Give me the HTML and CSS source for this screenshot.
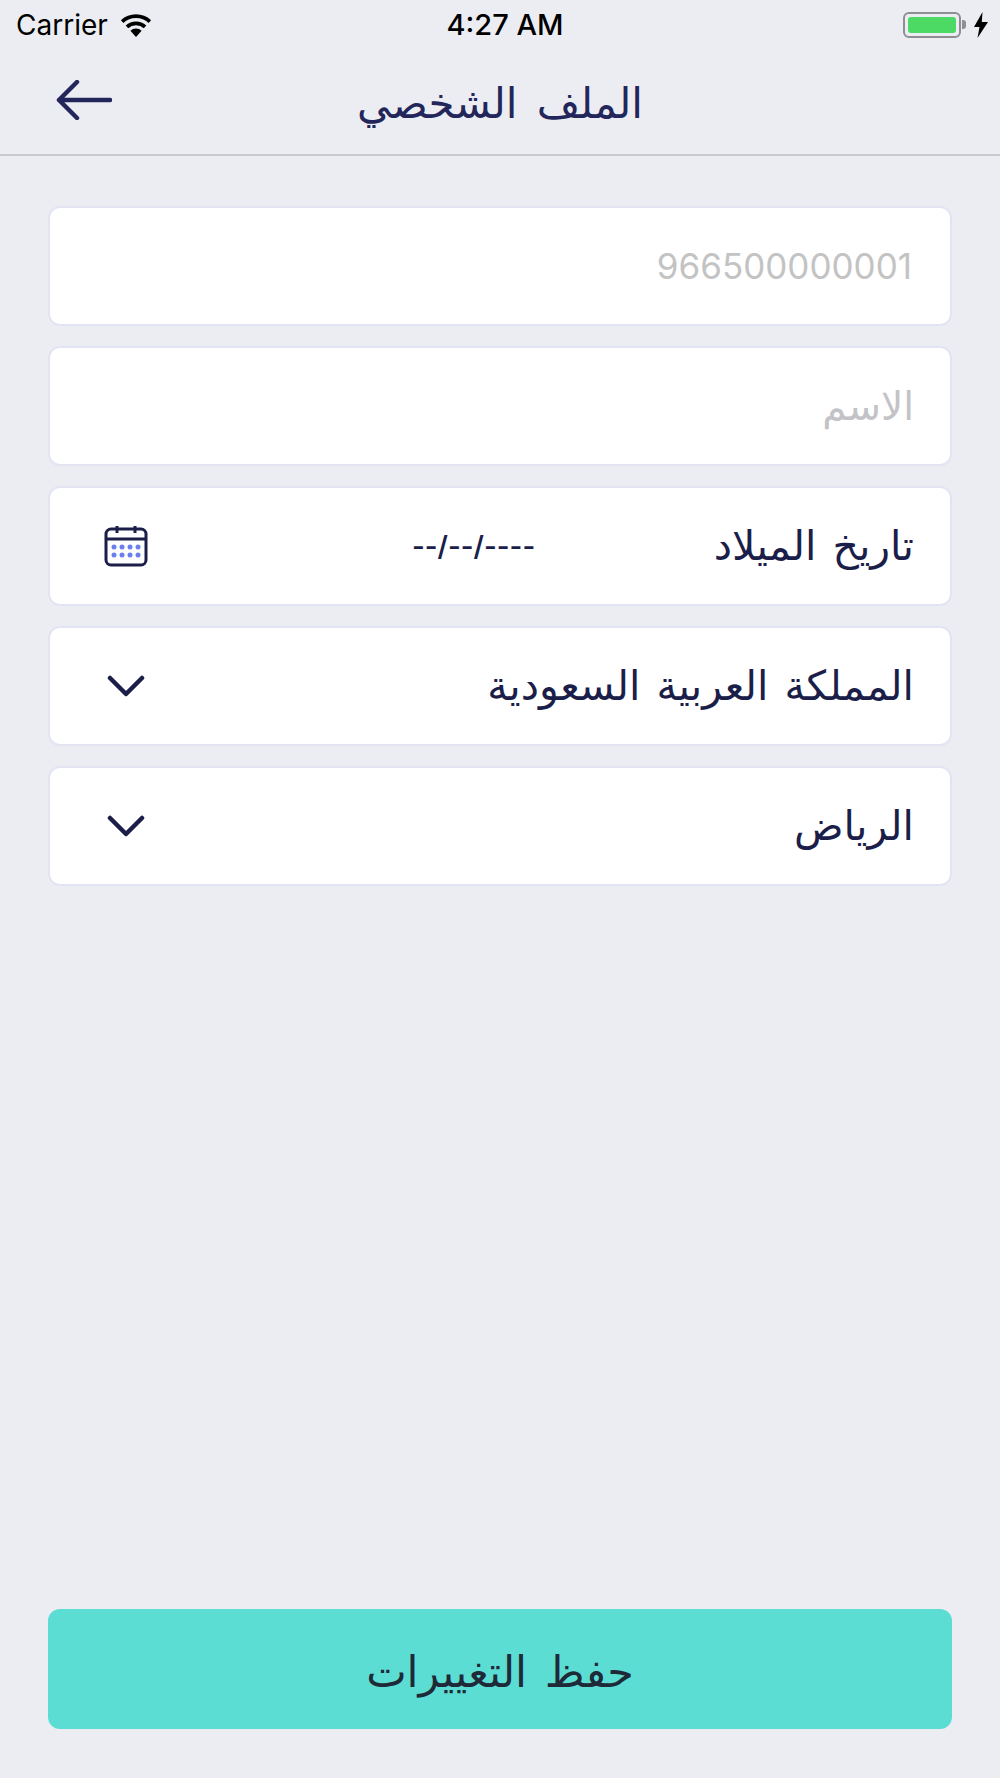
FILE: index.html
```html
<!DOCTYPE html>
<html lang="ar" dir="rtl">
  <head>
    <title>الملف الشخصي</title>
    <meta charset="UTF-8">
    <meta name="viewport" content="width=device-width, initial-scale=1">
    <link rel="stylesheet" href="styles.css">
  </head>
  <body>
    <div class="page">
      <div class="status-bar">
        <div class="status-bar__left">
          <span class="carrier">Carrier</span>
          <svg class="wifi" viewBox="0 0 34 24" width="34" height="24">
            <path d="M17 24l-5.6-6.2a8 8 0 0 1 11.2 0z" fill="#000"/>
            <path d="M9.2 15.300a11.500 11.500 0 0 1 15.600 0l2.500-2.800a15.300 15.300 0 0 0-20.600 0z" fill="#000"/>
            <path d="M4.400 10a18.500 18.500 0 0 1 25.200 0l2.500-2.800a22.300 22.300 0 0 0-30.200 0z" fill="#000"/>
          </svg>
        </div>
        <span class="time">4:27 AM</span>
        <div class="status-bar__right">
          <div class="battery"><div class="battery__level"></div></div>
          <div class="battery__nub"></div>
          <svg class="bolt" viewBox="0 0 14 26" width="14" height="26">
            <path d="M8.500 0L0 15h5.500L3.500 26 14 10H7.800z" fill="#000"/>
          </svg>
        </div>
      </div>

      <header class="nav">
        <a class="nav__back" href="#back">
          <svg viewBox="0 0 56 40" width="56" height="40">
            <path d="M54 20H3M21 2L3 20l18 18" fill="none" stroke="#22265a" stroke-width="4.500" stroke-linecap="round" stroke-linejoin="round"/>
          </svg>
        </a>
        <h1 class="nav__title">الملف الشخصي</h1>
      </header>

      <main class="form">
        <div class="field"><span class="field__text field__text--muted field__text--number">966500000001</span></div>
        <div class="field"><span class="field__text field__text--muted">الاسم</span></div>
        <div class="field">
          <span class="field__text">تاريخ الميلاد</span>
          <span class="field__date">--/--/----</span>
          <svg class="field__icon" viewBox="0 0 44 42" width="44" height="42">
            <rect x="2" y="4" width="40" height="36" rx="5" fill="none" stroke="#1b1e49" stroke-width="3"/>
            <path d="M2 14h40M13 1v7M31 1v7" fill="none" stroke="#1b1e49" stroke-width="3"/>
            <g fill="#6b7ff0">
              <circle cx="10" cy="22" r="2.500"/><circle cx="18" cy="22" r="2.500"/><circle cx="26" cy="22" r="2.500"/><circle cx="34" cy="22" r="2.500"/>
              <circle cx="10" cy="30" r="2.500"/><circle cx="18" cy="30" r="2.500"/><circle cx="26" cy="30" r="2.500"/><circle cx="34" cy="30" r="2.500"/>
            </g>
          </svg>
        </div>
        <div class="field">
          <span class="field__text">المملكة العربية السعودية</span>
          <svg class="field__icon" viewBox="0 0 44 22" width="44" height="22">
            <path d="M6 3l16 16L38 3" fill="none" stroke="#1b1e49" stroke-width="4.500" stroke-linecap="round" stroke-linejoin="round"/>
          </svg>
        </div>
        <div class="field">
          <span class="field__text">الرياض</span>
          <svg class="field__icon" viewBox="0 0 44 22" width="44" height="22">
            <path d="M6 3l16 16L38 3" fill="none" stroke="#1b1e49" stroke-width="4.500" stroke-linecap="round" stroke-linejoin="round"/>
          </svg>
        </div>
      </main>

      <button class="save-btn" type="button">حفظ التغييرات</button>
    </div>
  </body>
</html>
```

FILE: styles.css
```css
* {
  box-sizing: border-box;
}
html, body {
  margin: 0;
  padding: 0;
  background-color: #ecedf2;
  font-family: 'DejaVu Sans', sans-serif;
}
.page {
  height: 1778px;
  display: flex;
  flex-direction: column;
}

/* Status bar
---------------------------------------------------------------- */
.status-bar {
  height: 48px;
  padding: 1px 6px 0 16px;
  display: grid;
  grid-template-columns: 1fr auto 1fr;
  align-items: center;
  direction: ltr;
  color: #000;
  font-family: 'Inter', sans-serif;
  font-size: 28px;
}
.status-bar__left {
  display: flex;
  align-items: center;
  gap: 11px;
}
.status-bar__right {
  display: flex;
  align-items: center;
  justify-content: flex-end;
  padding-right: 6px;
}
.time {
  font-size: 29px;
  font-weight: 500;
}
.battery {
  width: 58px;
  height: 26px;
  padding: 3px;
  border: 2px solid #8e8e93;
  border-radius: 6px;
}
.battery__level {
  height: 100%;
  background-color: #4cd964;
  border-radius: 3px;
}
.battery__nub {
  width: 4px;
  height: 9px;
  margin-left: 1px;
  background-color: #8e8e93;
  border-radius: 0 3px 3px 0;
}
.bolt { margin-left: 8px; }

/* Nav
---------------------------------------------------------------- */
.nav {
  height: 108px;
  padding-top: 4px;
  display: flex;
  align-items: center;
  justify-content: center;
  position: relative;
  border-bottom: 2px solid #c9cad0;
}
.nav__back {
  position: absolute;
  left: 56px;
  top: 32px;
  display: block;
  line-height: 0;
}
.nav__title {
  margin: 0;
  color: #22265a;
  font-size: 42px;
  font-weight: 400;
  word-spacing: 6px;
}

/* Form
---------------------------------------------------------------- */
.form {
  flex: 1;
  padding: 50px 48px 0;
  display: flex;
  flex-direction: column;
  gap: 20px;
}
.field {
  height: 120px;
  padding: 0 36px 0 54px;
  display: flex;
  align-items: center;
  background-color: #fff;
  border: 2px solid #e2e4f2;
  border-radius: 12px;
}
.field__text {
  flex: 1;
  color: #1b1e49;
  font-size: 41px;
  word-spacing: 3px;
}
.field__text--muted {
  color: #c3c3c7;
  font-size: 39px;
}
.field__text--number {
  padding-right: 2px;
  color: #c3c3c3;
  font-family: 'Inter', sans-serif;
  font-size: 35px;
}
.field__date {
  margin-left: 264px;
  color: #1b1e49;
  font-family: 'Inter', sans-serif;
  font-size: 27.500px;
  font-weight: 600;
  direction: ltr;
}

/* Button
---------------------------------------------------------------- */
.save-btn {
  height: 120px;
  margin: 0 48px 49px;
  padding-top: 6px;
  background-color: #5cddd3;
  border: none;
  border-radius: 12px;
  color: #1e2a38;
  font-family: inherit;
  font-size: 43px;
  word-spacing: 4px;
}
```
